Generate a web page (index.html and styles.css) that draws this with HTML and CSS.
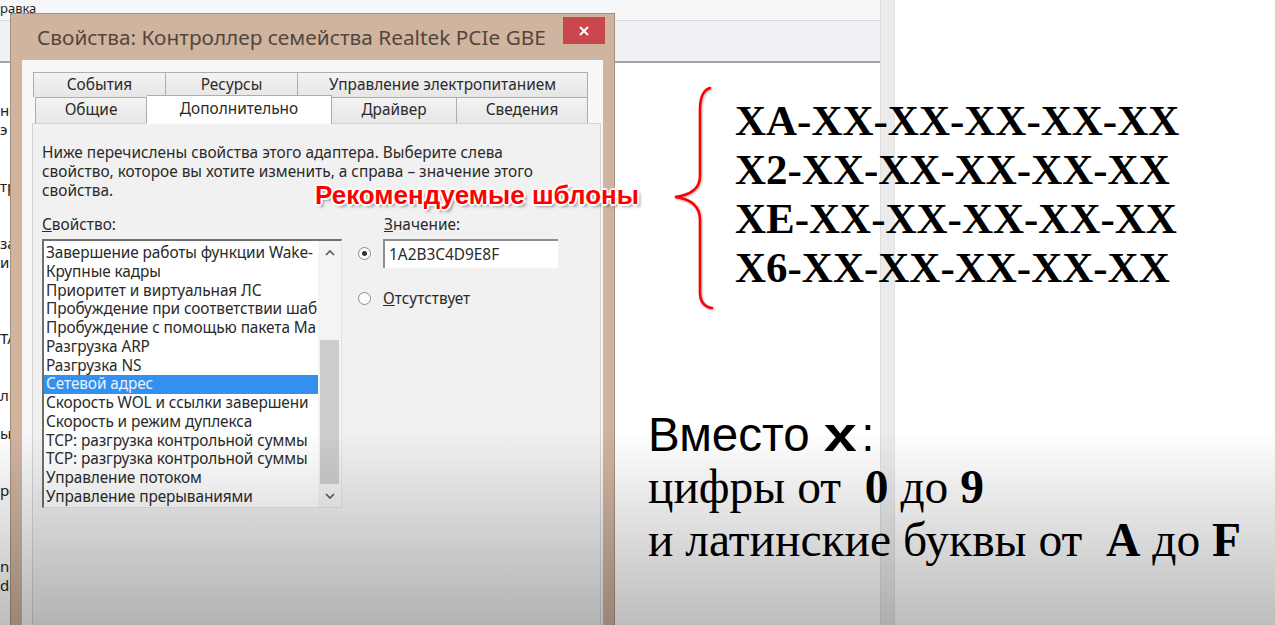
FILE: index.html
```html
<!DOCTYPE html>
<html lang="ru">
<head>
    <meta charset="UTF-8">
    <title>Сетевой адрес</title>
    <link rel="stylesheet" href="styles.css">
</head>
<body>
    <!-- окно на заднем плане -->
    <div class="bg-window">
        <div class="bg-main">
            <div class="bg-menu"><span>равка</span></div>
            <div class="bg-toolbar"></div>
            <div class="bg-list">
                <div>&nbsp;</div>
                <div>&nbsp;</div>
                <div>нс</div>
                <div>э</div>
                <div>&nbsp;</div>
                <div>&nbsp;</div>
                <div>тр</div>
                <div>&nbsp;</div>
                <div>&nbsp;</div>
                <div>за</div>
                <div>и</div>
                <div>&nbsp;</div>
                <div>&nbsp;</div>
                <div>&nbsp;</div>
                <div>ТА</div>
                <div>&nbsp;</div>
                <div>&nbsp;</div>
                <div>ли</div>
                <div>&nbsp;</div>
                <div>ы</div>
                <div>&nbsp;</div>
                <div>&nbsp;</div>
                <div>ро</div>
                <div>&nbsp;</div>
                <div>&nbsp;</div>
                <div>&nbsp;</div>
                <div>n</div>
                <div>da</div>
            </div>
        </div>
        <div class="bg-strip"></div>
    </div>

    <!-- диалог свойств -->
    <div class="dialog">
        <div class="titlebar">
            <div class="title">Свойства: Контроллер семейства Realtek PCIe GBE</div>
            <div class="close-btn">
                <svg width="10" height="10" viewBox="0 0 10 10"><path d="M1 1 L9 9 M9 1 L1 9" stroke="#fff" stroke-width="2"/></svg>
            </div>
        </div>
        <div class="client">
            <div class="tab-row back">
                <div class="tab">События</div>
                <div class="tab">Ресурсы</div>
                <div class="tab">Управление электропитанием</div>
            </div>
            <div class="tab-row front">
                <div class="tab">Общие</div>
                <div class="tab active">Дополнительно</div>
                <div class="tab">Драйвер</div>
                <div class="tab">Сведения</div>
            </div>
            <div class="panel">
                <p class="hint">Ниже перечислены свойства этого адаптера. Выберите слева<br>свойство, которое вы хотите изменить, а справа – значение этого<br>свойства.</p>
                <div class="props">
                    <div class="col-left">
                        <div class="label"><u>С</u>войство:</div>
                        <div class="listbox">
                            <div class="items">
                                <div class="item">Завершение работы функции Wake-</div>
                                <div class="item">Крупные кадры</div>
                                <div class="item">Приоритет и виртуальная ЛС</div>
                                <div class="item">Пробуждение при соответствии шаб</div>
                                <div class="item">Пробуждение с помощью пакета Ма</div>
                                <div class="item">Разгрузка ARP</div>
                                <div class="item">Разгрузка NS</div>
                                <div class="item selected">Сетевой адрес</div>
                                <div class="item">Скорость WOL и ссылки завершени</div>
                                <div class="item">Скорость и режим дуплекса</div>
                                <div class="item">TCP: разгрузка контрольной суммы</div>
                                <div class="item">TCP: разгрузка контрольной суммы</div>
                                <div class="item">Управление потоком</div>
                                <div class="item">Управление прерываниями</div>
                            </div>
                            <div class="scrollbar">
                                <div class="sb-btn">
                                    <svg width="10" height="6" viewBox="0 0 10 6"><path d="M1 5 L5 1 L9 5" fill="none" stroke="#555" stroke-width="1.6"/></svg>
                                </div>
                                <div class="sb-track"><div class="sb-thumb"></div></div>
                                <div class="sb-btn">
                                    <svg width="10" height="6" viewBox="0 0 10 6"><path d="M1 1 L5 5 L9 1" fill="none" stroke="#555" stroke-width="1.6"/></svg>
                                </div>
                            </div>
                        </div>
                    </div>
                    <div class="col-right">
                        <div class="label value-label"><u>З</u>начение:</div>
                        <div class="radio-row">
                            <span class="radio checked"></span>
                            <div class="textbox">1A2B3C4D9E8F</div>
                        </div>
                        <div class="radio-row second">
                            <span class="radio"></span>
                            <span><u>О</u>тсутствует</span>
                        </div>
                    </div>
                </div>
            </div>
        </div>
    </div>

    <!-- пометки поверх скриншота -->
    <div class="callout">Рекомендуемые шблоны</div>

    <svg class="brace" width="60" height="240" viewBox="0 0 60 240">
        <path d="M50 8 C43 10 40 17 40 30 L40 96 C40 108 31 115 15 117 C31 119 40 126 40 140 L40 212 C40 222 44 227 52 228" fill="none" stroke="#f00" stroke-width="2.6" stroke-linecap="round"/>
    </svg>

    <div class="masks">
        <div>XA-XX-XX-XX-XX-XX</div>
        <div>X2-XX-XX-XX-XX-XX</div>
        <div>XE-XX-XX-XX-XX-XX</div>
        <div>X6-XX-XX-XX-XX-XX</div>
    </div>

    <div class="legend">
        <div class="legend-head">Вместо <b class="big-x">x</b>:</div>
        <div>цифры от &nbsp;<b>0</b> до <b>9</b></div>
        <div>и латинские буквы от &nbsp;<b>A</b> до <b>F</b></div>
    </div>
</body>
</html>
```

FILE: styles.css
```css
body {
    margin: 0;
    width: 1275px;
    height: 625px;
    overflow: hidden;
    position: relative;
    background: #ffffff;
    font-family: 'Noto Sans', 'Open Sans', sans-serif;
    color: #222;
}

/* затемнение внизу кадра */
body::after {
    content: '';
    position: absolute;
    left: 0;
    right: 0;
    top: 430px;
    bottom: 0;
    background: linear-gradient(rgba(0, 0, 0, 0), rgba(0, 0, 0, 0.26));
    pointer-events: none;
    z-index: 10;
}

/* окно на заднем плане */
.bg-window {
    display: flex;
    width: 895px;
    height: 625px;
}

.bg-main {
    width: 880px;
    display: flex;
    flex-direction: column;
}

.bg-menu {
    height: 20px;
    background: #f6f7f9;
    border-bottom: 1px solid #d5d7db;
    font-size: 13px;
    line-height: 16px;
}

.bg-menu span {
    display: block;
}

.bg-toolbar {
    height: 40px;
    background: #eff1f4;
    border-bottom: 2px solid #a3a5a8;
}

.bg-list {
    font-size: 15px;
    line-height: 19px;
}

.bg-strip {
    width: 13px;
    background: #ebebeb;
    border-left: 1px solid #dddddd;
    border-right: 1px solid #e3e3e3;
}

/* диалог */
.dialog {
    position: absolute;
    left: 10px;
    top: 13px;
    width: 603px;
    height: 640px;
    background: #cfb4a0;
    border: 1px solid #a88f7c;
    display: flex;
    flex-direction: column;
    z-index: 2;
}

.titlebar {
    height: 46px;
    display: flex;
    align-items: flex-start;
}

.title {
    margin: 10px 0 0 26px;
    font-size: 20.8px;
    line-height: 26px;
    color: #54463b;
    white-space: nowrap;
}

.close-btn {
    margin: 3px 9px 0 auto;
    width: 42px;
    height: 27px;
    background: #c9464c;
    display: flex;
    align-items: center;
    justify-content: center;
}

.client {
    flex: 1;
    margin: 0 11px;
    background: #f7f7f7;
    padding: 12px 0 0 10px;
    display: flex;
    flex-direction: column;
    font-size: 15.4px;
    color: #2a2a2a;
}

.tab-row {
    display: grid;
    height: 25px;
}

.tab-row.back {
    margin-left: 1px;
    grid-template-columns: 133px 132px 290px;
}

.tab-row.front {
    margin-left: 3px;
    grid-template-columns: 112px 185px 125px 131px;
    height: 26px;
}

.tab {
    border: 1px solid #adadad;
    border-bottom: none;
    border-left: none;
    background: linear-gradient(#f3f3f3, #e6e6e6);
    text-align: center;
    line-height: 24px;
    white-space: nowrap;
}

.tab:first-child {
    border-left: 1px solid #adadad;
}

.tab.active {
    background: #ffffff;
    margin-top: -2px;
    margin-bottom: -1px;
    position: relative;
    z-index: 1;
    line-height: 26px;
}

.panel {
    flex: 1;
    width: 558px;
    background: #f1f1f1;
    border: 1px solid #d3d3d3;
    padding: 19px 0 0 9px;
}

.hint {
    margin: 0;
    line-height: 19px;
}

.props {
    display: grid;
    grid-template-columns: 300px 200px;
    column-gap: 16px;
    margin-top: 15px;
}

.label {
    line-height: 19px;
    margin-bottom: 5px;
}

.listbox {
    height: 266px;
    display: flex;
    background: #ffffff;
    border-top: 2px solid #6f6f6f;
    border-left: 2px solid #6f6f6f;
    border-right: 1px solid #e2e2e2;
    border-bottom: 1px solid #e2e2e2;
}

.items {
    flex: 1;
    min-width: 0;
    padding-top: 3px;
}

.item {
    height: 18.77px;
    line-height: 18.77px;
    padding-left: 2px;
    white-space: nowrap;
    letter-spacing: -0.1px;
}

.item.selected {
    background: #3390ef;
    color: #e6f1ff;
}

.scrollbar {
    width: 23px;
    display: flex;
    flex-direction: column;
    background: #f4f4f4;
}

.sb-btn {
    height: 23px;
    display: flex;
    align-items: center;
    justify-content: center;
}

.sb-track {
    flex: 1;
    display: flex;
    flex-direction: column;
    justify-content: flex-end;
    padding: 0 2px;
}

.sb-thumb {
    height: 144px;
    background: #cdcdcd;
}

.value-label {
    padding-left: 26px;
}

.radio-row {
    display: flex;
    align-items: center;
    gap: 12px;
}

.radio-row.second {
    margin-top: 20px;
}

.radio {
    width: 11px;
    height: 11px;
    border: 1px solid #8b8b8b;
    border-radius: 50%;
    background: #fbfbfb;
    position: relative;
}

.radio.checked::after {
    content: '';
    position: absolute;
    left: 3px;
    top: 3px;
    width: 5px;
    height: 5px;
    border-radius: 50%;
    background: #333;
}

.textbox {
    width: 169px;
    height: 27px;
    line-height: 27px;
    padding-left: 4px;
    background: #ffffff;
    border-top: 2px solid #8f8f8f;
    border-left: 2px solid #8f8f8f;
}

/* пометки */
.callout {
    position: absolute;
    left: 315px;
    top: 180px;
    z-index: 5;
    font-family: 'Liberation Sans', Arial, sans-serif;
    font-weight: bold;
    font-size: 26px;
    color: #ff0000;
    white-space: nowrap;
    text-shadow: -2px 0 0 #fff, 2px 0 0 #fff, 0 -2px 0 #fff, 0 2px 0 #fff,
        -1px -1px 0 #fff, 1px 1px 0 #fff, -1px 1px 0 #fff, 1px -1px 0 #fff,
        3px 3px 3px rgba(0, 0, 0, 0.35);
}

.brace {
    position: absolute;
    left: 660px;
    top: 80px;
    z-index: 5;
    filter: drop-shadow(1px 1px 1px rgba(0, 0, 0, 0.3));
}

.masks {
    position: absolute;
    left: 735px;
    top: 96px;
    z-index: 5;
    font-family: 'Liberation Serif', 'Times New Roman', serif;
    font-weight: bold;
    font-size: 43px;
    line-height: 49px;
    color: #000;
    white-space: nowrap;
}

.legend {
    position: absolute;
    left: 648px;
    top: 408px;
    z-index: 5;
    font-family: 'Liberation Serif', 'Times New Roman', serif;
    font-size: 47.5px;
    line-height: 53px;
    color: #000;
    white-space: nowrap;
}

.legend-head {
    font-family: 'Liberation Sans', Arial, sans-serif;
}

.big-x {
    display: inline-block;
    transform: scaleX(1.25);
    margin: 0 8px 0 4px;
}
```
